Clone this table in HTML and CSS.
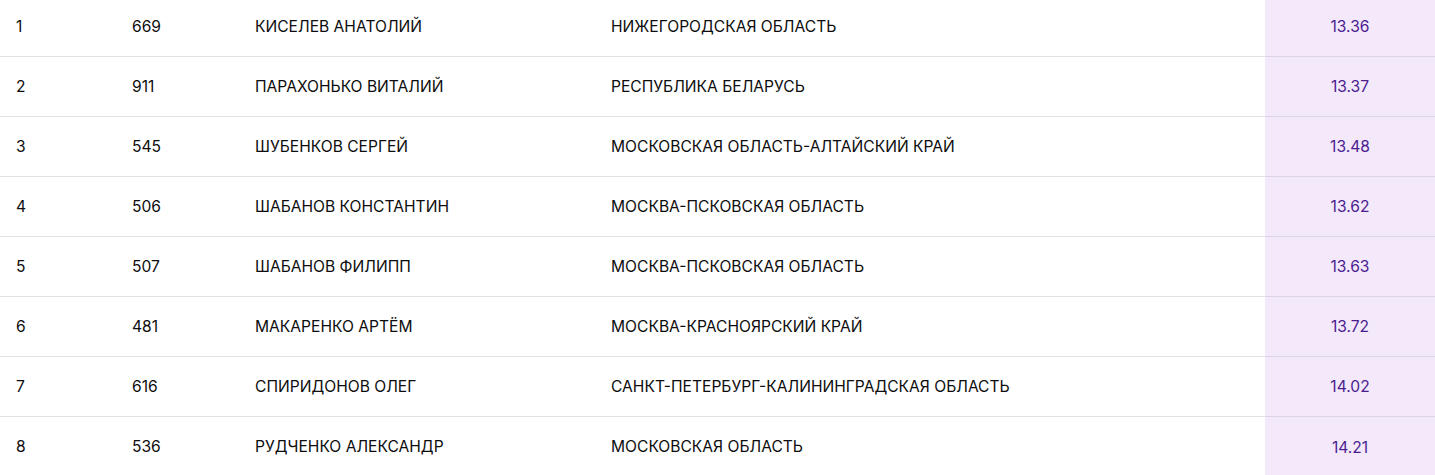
FILE: index.html
```html
<!DOCTYPE html>
<html lang="ru">
<head>
<meta charset="utf-8">
<title>Результаты</title>
<link rel="stylesheet" href="styles.css">
</head>
<body>
<div class="table">
  <div class="row"><div class="cell">1</div><div class="cell">669</div><div class="cell">КИСЕЛЕВ АНАТОЛИЙ</div><div class="cell">НИЖЕГОРОДСКАЯ ОБЛАСТЬ</div><div class="cell time">13.36</div></div>
  <div class="row"><div class="cell">2</div><div class="cell">911</div><div class="cell">ПАРАХОНЬКО ВИТАЛИЙ</div><div class="cell">РЕСПУБЛИКА БЕЛАРУСЬ</div><div class="cell time">13.37</div></div>
  <div class="row"><div class="cell">3</div><div class="cell">545</div><div class="cell">ШУБЕНКОВ СЕРГЕЙ</div><div class="cell">МОСКОВСКАЯ ОБЛАСТЬ-АЛТАЙСКИЙ КРАЙ</div><div class="cell time">13.48</div></div>
  <div class="row"><div class="cell">4</div><div class="cell">506</div><div class="cell">ШАБАНОВ КОНСТАНТИН</div><div class="cell">МОСКВА-ПСКОВСКАЯ ОБЛАСТЬ</div><div class="cell time">13.62</div></div>
  <div class="row"><div class="cell">5</div><div class="cell">507</div><div class="cell">ШАБАНОВ ФИЛИПП</div><div class="cell">МОСКВА-ПСКОВСКАЯ ОБЛАСТЬ</div><div class="cell time">13.63</div></div>
  <div class="row"><div class="cell">6</div><div class="cell">481</div><div class="cell">МАКАРЕНКО АРТЁМ</div><div class="cell">МОСКВА-КРАСНОЯРСКИЙ КРАЙ</div><div class="cell time">13.72</div></div>
  <div class="row"><div class="cell">7</div><div class="cell">616</div><div class="cell">СПИРИДОНОВ ОЛЕГ</div><div class="cell">САНКТ-ПЕТЕРБУРГ-КАЛИНИНГРАДСКАЯ ОБЛАСТЬ</div><div class="cell time">14.02</div></div>
  <div class="row"><div class="cell">8</div><div class="cell">536</div><div class="cell">РУДЧЕНКО АЛЕКСАНДР</div><div class="cell">МОСКОВСКАЯ ОБЛАСТЬ</div><div class="cell time">14.21</div></div>
</div>
</body>
</html>
```
FILE: styles.css
```css
html, body {
  margin: 0;
  padding: 0;
  background: #ffffff;
  overflow: hidden;
}
body {
  font-family: Inter, "Noto Sans", "DejaVu Sans", sans-serif;
  font-size: 15.6px;
  font-weight: 400;
  color: #0d0d0d;
}
.table {
  margin-top: -3px;
}
.row {
  display: grid;
  grid-template-columns: 116px 123px 356px 670px 1fr;
  border-bottom: 1px solid #e2e2e2;
}
.cell {
  height: 59px;
  display: flex;
  align-items: center;
  padding-left: 16px;
  white-space: nowrap;
}
.time {
  padding-left: 0;
  justify-content: center;
  background: #f3e9fb;
  color: #4b1d8f;
  margin-bottom: -1px;
  border-bottom: 1px solid #ddd3e6;
}
.row:last-child .time {
  height: 60px;
}
```
